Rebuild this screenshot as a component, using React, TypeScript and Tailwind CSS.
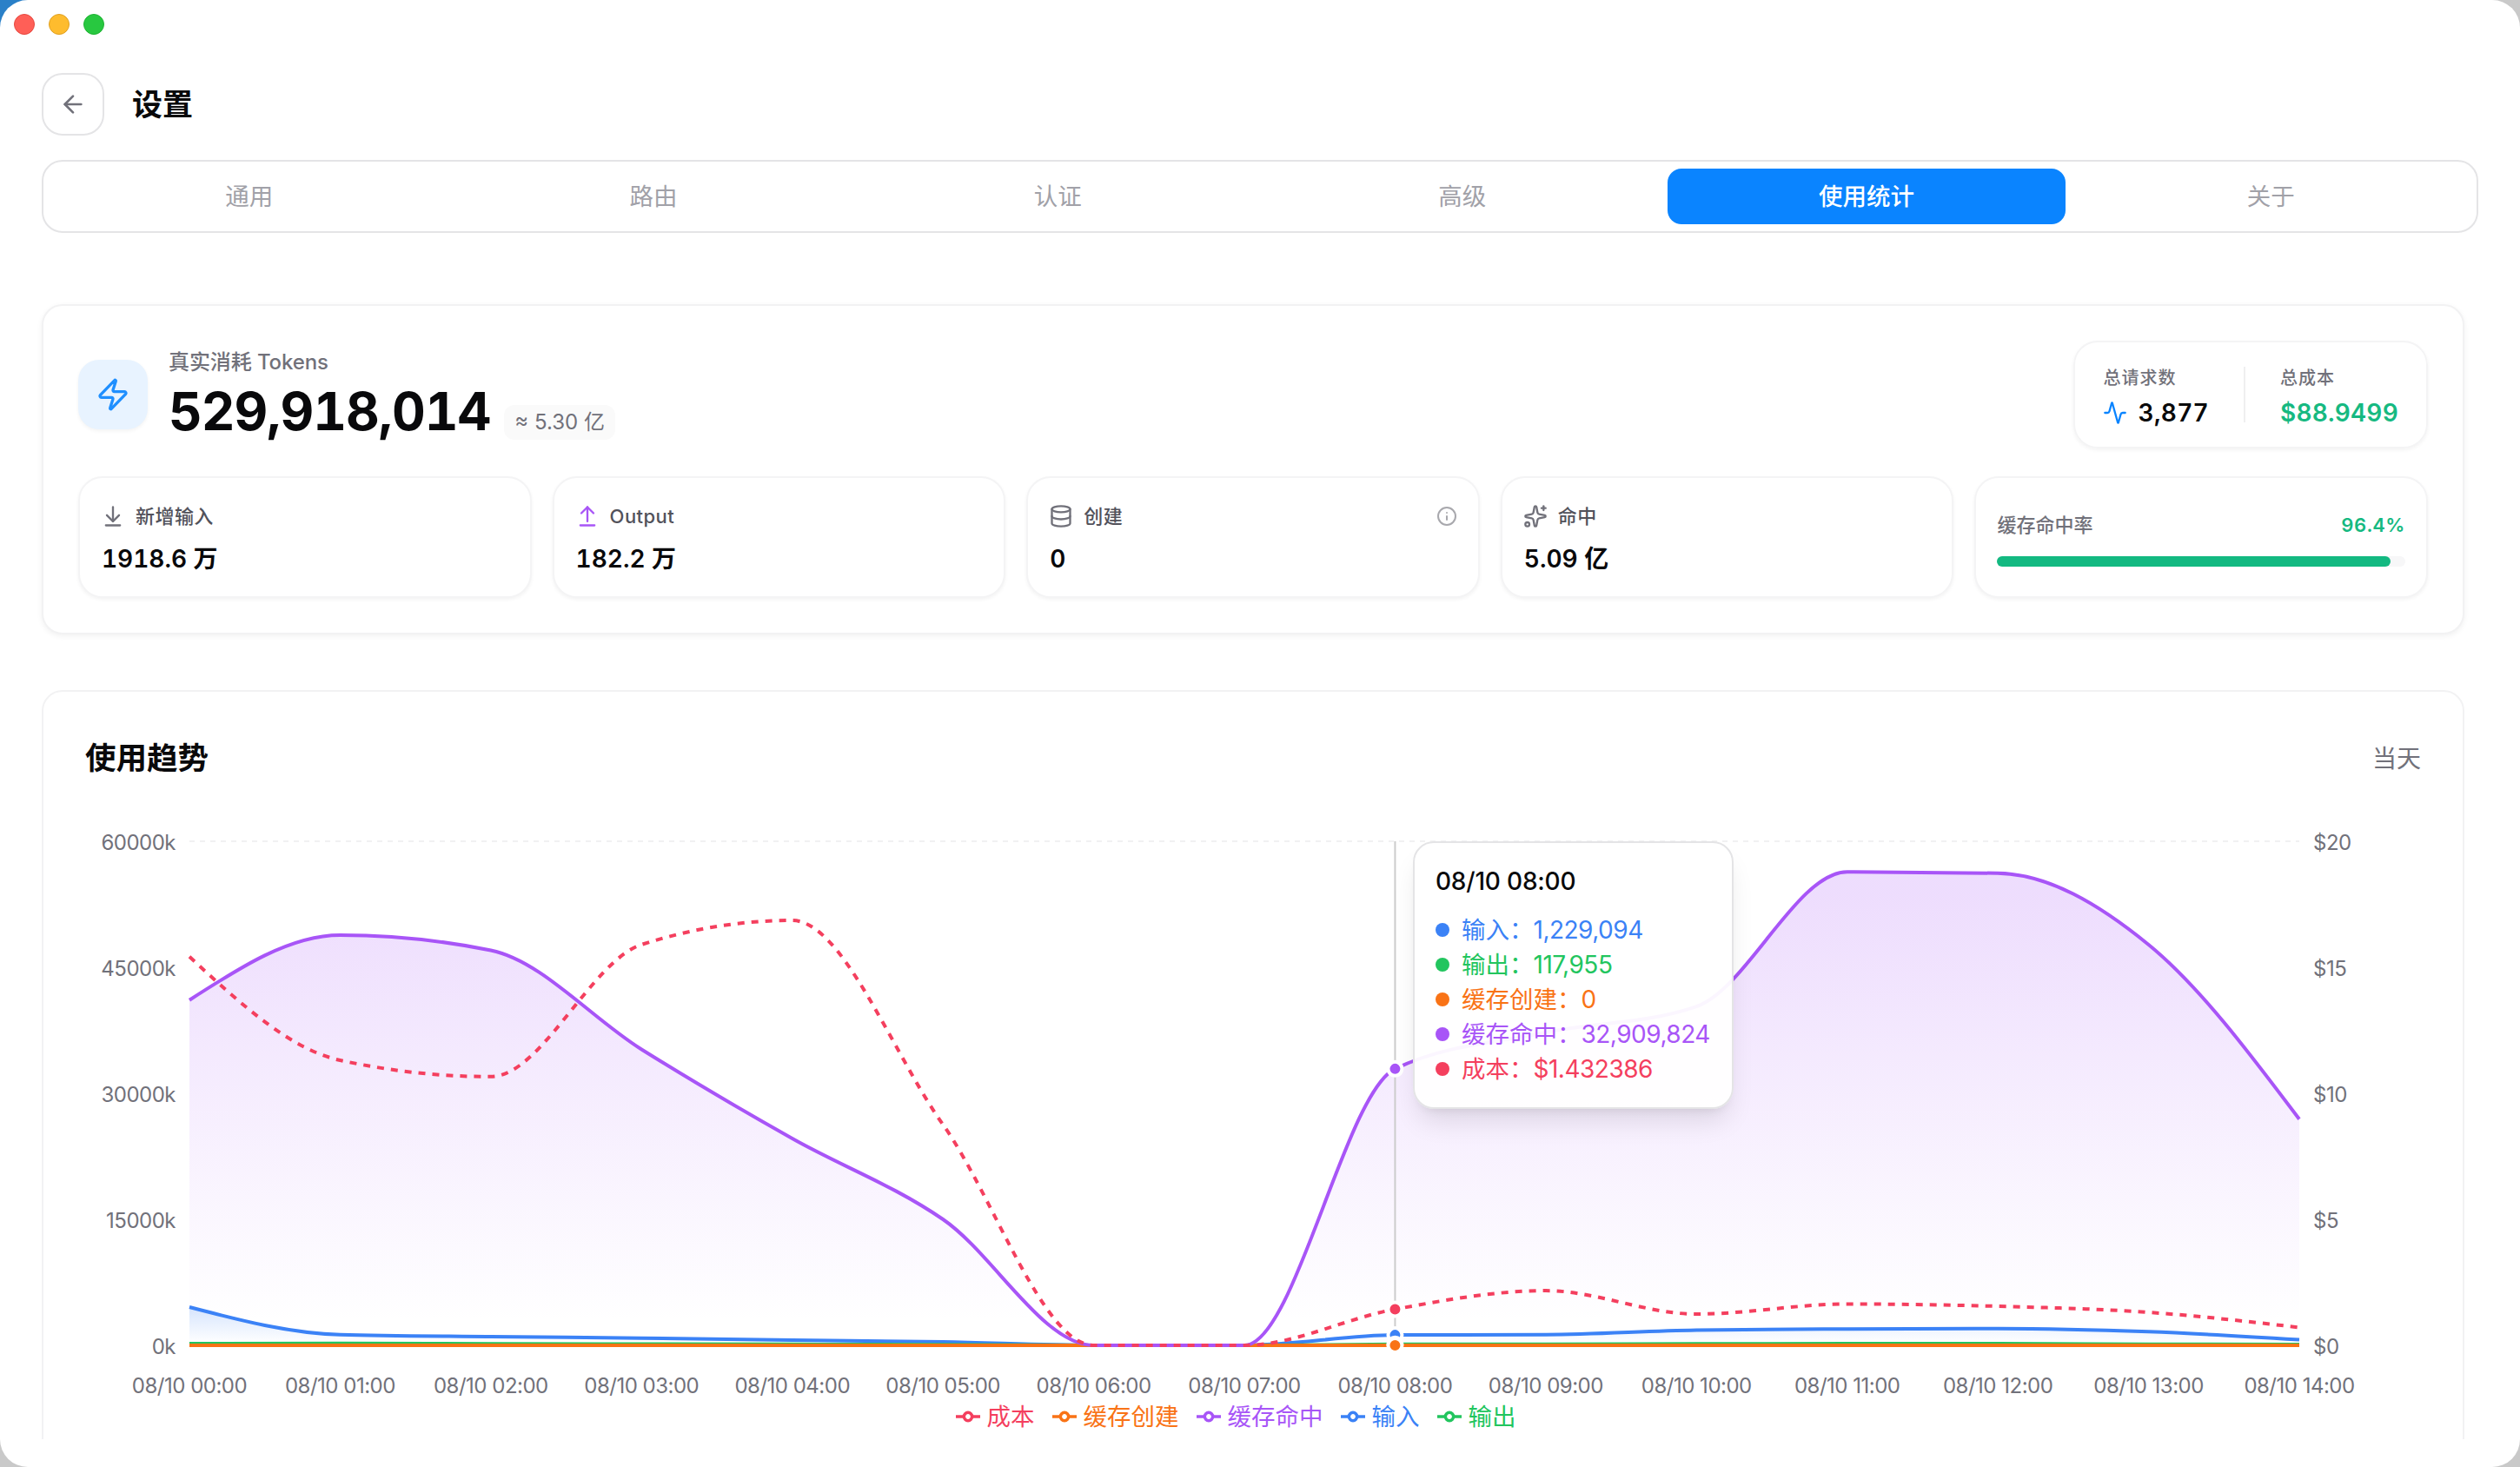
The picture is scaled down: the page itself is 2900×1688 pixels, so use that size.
import type { ReactNode } from 'react';
import {
  Activity,
  ArrowDownToLine,
  ArrowLeft,
  ArrowUpFromLine,
  Database,
  Info,
  Sparkles,
  Zap,
} from 'lucide-react';

const TABS = ['通用', '路由', '认证', '高级', '使用统计', '关于'];
const ACTIVE_TAB = '使用统计';

const COLORS = {
  input: '#3b82f6',
  output: '#22c55e',
  cacheCreate: '#f97316',
  cacheHit: '#a855f7',
  cost: '#f43f5e',
};

// Hourly buckets, tokens in millions, cost in dollars
const INPUT = [4.55, 1.27, 1.03, 0.86, 0.62, 0.41, 0, 0, 1.229, 1.27, 1.81, 1.95, 2.0, 1.62, 0.67];
const OUTPUT = [0.2, 0.24, 0.18, 0.15, 0.12, 0.08, 0, 0, 0.118, 0.13, 0.18, 0.2, 0.2, 0.14, 0.1];
const CACHE_CREATE = [0, 0, 0, 0, 0, 0, 0, 0, 0, 0, 0, 0, 0, 0, 0];
const CACHE_HIT = [41.1, 48.83, 47.02, 35.22, 24.62, 15.0, 0, 0, 32.91, 37.24, 40.34, 56.35, 56.2, 47.69, 26.92];
const COST = [15.42, 11.31, 10.66, 15.9, 16.86, 8.76, 0, 0, 1.4324, 2.17, 1.24, 1.64, 1.55, 1.31, 0.71];

const PLOT = { left: 120, right: 2548, top: 20, bottom: 600 };
const HOVER = 8;

const xAt = (i: number) => PLOT.left + (i * (PLOT.right - PLOT.left)) / 14;
const yAt = (v: number, max: number) => PLOT.bottom - (v / max) * (PLOT.bottom - PLOT.top);

/** Monotone cubic interpolation, same tangents as d3's curveMonotoneX. */
function monotonePath(values: number[], max: number) {
  const pts = values.map((v, i) => [xAt(i), yAt(v, max)]);
  const n = pts.length;
  const h = xAt(1) - xAt(0);
  const slopes = pts.slice(1).map((p, i) => (p[1] - pts[i][1]) / h);
  const t: number[] = new Array(n).fill(0);
  for (let i = 1; i < n - 1; i++) {
    const s0 = slopes[i - 1];
    const s1 = slopes[i];
    const p = (s0 + s1) / 2;
    t[i] = (Math.sign(s0) + Math.sign(s1)) * Math.min(Math.abs(s0), Math.abs(s1), 0.5 * Math.abs(p)) || 0;
  }
  t[0] = (3 * slopes[0] - t[1]) / 2;
  t[n - 1] = (3 * slopes[n - 2] - t[n - 2]) / 2;

  let d = `M${pts[0][0]},${pts[0][1]}`;
  for (let i = 1; i < n; i++) {
    const [x0, y0] = pts[i - 1];
    const [x1, y1] = pts[i];
    d += `C${x0 + h / 3},${y0 + (h / 3) * t[i - 1]},${x1 - h / 3},${y1 - (h / 3) * t[i]},${x1},${y1}`;
  }
  return d;
}

function AreaSeries({ id, values, color }: { id: string; values: number[]; color: string }) {
  const line = monotonePath(values, 60);
  return (
    <g>
      <defs>
        <linearGradient id={id} x1="0" y1="0" x2="0" y2="1">
          <stop offset="5%" stopColor={color} stopOpacity={0.2} />
          <stop offset="95%" stopColor={color} stopOpacity={0} />
        </linearGradient>
      </defs>
      <path d={`${line}L${PLOT.right},${PLOT.bottom}L${PLOT.left},${PLOT.bottom}Z`} fill={`url(#${id})`} />
      <path d={line} fill="none" stroke={color} strokeWidth={4} />
    </g>
  );
}

function ActiveDot({ value, max, color }: { value: number; max: number; color: string }) {
  return <circle cx={xAt(HOVER)} cy={yAt(value, max)} r={8} fill={color} stroke="#fff" strokeWidth={4} />;
}

function TrendChart() {
  return (
    <svg className="block w-[2688px] h-[662px] overflow-visible" viewBox="0 0 2688 662">
      <line
        x1={PLOT.left} x2={PLOT.right} y1={PLOT.top} y2={PLOT.top}
        stroke="#f1f1f2" strokeWidth={2} strokeDasharray="6 6"
      />
      <g fill="#71717a" fontSize={24} letterSpacing={-0.5}>
        {[60000, 45000, 30000, 15000, 0].map((v) => (
          <text key={v} x={104} y={yAt(v, 60000) + 9.5} textAnchor="end">{`${v}k`}</text>
        ))}
        {[20, 15, 10, 5, 0].map((v) => (
          <text key={v} x={2564} y={yAt(v, 20) + 9.5}>{`$${v}`}</text>
        ))}
        {INPUT.map((_, i) => (
          <text key={i} x={xAt(i)} y={655} textAnchor="middle">
            {`08/10 ${String(i).padStart(2, '0')}:00`}
          </text>
        ))}
      </g>

      <AreaSeries id="fill-input" values={INPUT} color={COLORS.input} />
      <AreaSeries id="fill-output" values={OUTPUT} color={COLORS.output} />
      <AreaSeries id="fill-create" values={CACHE_CREATE} color={COLORS.cacheCreate} />
      <AreaSeries id="fill-hit" values={CACHE_HIT} color={COLORS.cacheHit} />
      <path
        d={monotonePath(COST, 20)}
        fill="none" stroke={COLORS.cost} strokeWidth={4} strokeDasharray="8 8"
      />

      {/* Hover cursor */}
      <line x1={xAt(HOVER)} x2={xAt(HOVER)} y1={PLOT.top} y2={PLOT.bottom} stroke="#ccc" strokeWidth={2} />
      <ActiveDot value={INPUT[HOVER]} max={60} color={COLORS.input} />
      <ActiveDot value={OUTPUT[HOVER]} max={60} color={COLORS.output} />
      <ActiveDot value={0} max={60} color={COLORS.cacheCreate} />
      <ActiveDot value={CACHE_HIT[HOVER]} max={60} color={COLORS.cacheHit} />
      <ActiveDot value={COST[HOVER]} max={20} color={COLORS.cost} />
    </svg>
  );
}

const TOOLTIP_ROWS = [
  { label: '输入', value: '1,229,094', color: COLORS.input },
  { label: '输出', value: '117,955', color: COLORS.output },
  { label: '缓存创建', value: '0', color: COLORS.cacheCreate },
  { label: '缓存命中', value: '32,909,824', color: COLORS.cacheHit },
  { label: '成本', value: '$1.432386', color: COLORS.cost },
];

function ChartTooltip() {
  return (
    <div className="absolute left-[1528px] top-5 w-[369px] h-[308px] rounded-3xl border-2 border-[#e4e4e6] bg-white/95 p-6 shadow-[0_20px_30px_-6px_rgba(0,0,0,0.1),0_8px_12px_-8px_rgba(0,0,0,0.1)]">
      <div className="mb-4 h-10 text-[28px]/10 font-medium tracking-[-0.2px] text-[#09090b]">08/10 08:00</div>
      {TOOLTIP_ROWS.map((row) => (
        <div
          key={row.label}
          className="flex h-10 items-center whitespace-nowrap"
          style={{ color: row.color }}
        >
          <span className="mr-[14px] size-4 shrink-0 rounded-full bg-current" />
          <span className="text-[27.5px]/10">{row.label}：</span>
          <span className="text-[28px]/10 tracking-[-0.5px]">{row.value}</span>
        </div>
      ))}
    </div>
  );
}

const LEGEND = [
  { label: '成本', color: COLORS.cost },
  { label: '缓存创建', color: COLORS.cacheCreate },
  { label: '缓存命中', color: COLORS.cacheHit },
  { label: '输入', color: COLORS.input },
  { label: '输出', color: COLORS.output },
];

function Legend() {
  return (
    <div className="flex h-10 items-center justify-center gap-5 pr-10">
      {LEGEND.map((item) => (
        <div key={item.label} className="flex items-center gap-2 text-[27.5px]/10" style={{ color: item.color }}>
          <svg className="size-7" viewBox="0 0 32 32" fill="none" stroke="currentColor" strokeWidth={4}>
            <path d="M0,16h10.67A5.33,5.33,0,1,1,21.33,16H32M21.33,16A5.33,5.33,0,1,1,10.67,16" />
          </svg>
          <span>{item.label}</span>
        </div>
      ))}
    </div>
  );
}

const STAT_CARD = 'h-[140px] rounded-[28px] border-2 border-[#f4f4f5] bg-white px-6 shadow-[0_2px_4px_rgba(0,0,0,0.05)]';

interface StatCardProps {
  icon: ReactNode;
  label: string;
  value: string;
  info?: boolean;
}

function StatCard({ icon, label, value, info }: StatCardProps) {
  return (
    <div className={`${STAT_CARD} pt-6`}>
      <div className="flex h-10 items-center gap-3">
        {icon}
        <span className="text-[22px] font-medium tracking-[0.02em] text-[#52525b]">{label}</span>
        {info && <Info className="ml-auto size-6 text-[#a8a8ad]" />}
      </div>
      <div className="mt-[9px] h-10 pl-px text-[28px]/10 font-semibold text-[#09090b] tabular-nums">{value}</div>
    </div>
  );
}

function SummaryCard() {
  return (
    <section className="mt-[82px] w-[2788px] h-[380px] rounded-3xl border-2 border-[#f2f2f3] bg-white p-10 shadow-[0_2px_6px_rgba(0,0,0,0.06)]">
      <div className="flex h-[124px] items-center justify-between">
        <div className="flex items-center">
          <div className="flex size-20 items-center justify-center rounded-3xl bg-[#e8f3ff] shadow-[0_2px_4px_rgba(0,0,0,0.05)]">
            <Zap className="size-10 text-[#1f8fff]" />
          </div>
          <div className="ml-6 flex h-[124px] flex-col pt-[9px]">
            <span className="h-8 text-2xl/8 font-medium tracking-[-0.1px] text-[#71717a]">真实消耗 Tokens</span>
            <div className="mt-0.5 flex h-[76px] items-start">
              <span className="text-[60px]/[76px] font-bold tracking-[-1px] text-[#09090b] tabular-nums">
                529,918,014
              </span>
              <span className="ml-4 mt-[31px] h-10 rounded-xl bg-[#fafafa] px-3 text-2xl/10 text-[#71717a]">
                ≈ 5.30 亿
              </span>
            </div>
          </div>
        </div>

        <div className="flex h-[124px] items-center rounded-[28px] border-2 border-[#f4f4f5] px-8 shadow-[0_2px_4px_rgba(0,0,0,0.05)]">
          <div className="flex flex-col pt-1.5">
            <span className="h-8 text-xl/8 font-medium tracking-[0.05em] text-[#71717a]">总请求数</span>
            <span className="mt-1 flex h-10 items-center gap-3 text-[28px]/10 font-semibold tracking-[0.3px] text-[#09090b] tabular-nums">
              <Activity className="size-7 text-[#0a84ff]" />
              3,877
            </span>
          </div>
          <div className="mx-10 h-16 w-0.5 bg-[#efeff0]" />
          <div className="flex flex-col pt-1.5">
            <span className="h-8 text-xl/8 font-medium tracking-[0.05em] text-[#71717a]">总成本</span>
            <span className="mt-1 h-10 text-[28px]/10 font-semibold tracking-[0.2px] text-[#16b981] tabular-nums">
              $88.9499
            </span>
          </div>
        </div>
      </div>

      <div className="mt-8 grid grid-cols-5 gap-6">
        <StatCard icon={<ArrowDownToLine className="size-7 text-[#71717a]" />} label="新增输入" value="1918.6 万" />
        <StatCard icon={<ArrowUpFromLine className="size-7 text-[#a855f7]" />} label="Output" value="182.2 万" />
        <StatCard icon={<Database className="size-7 text-[#71717a]" />} label="创建" value="0" info />
        <StatCard icon={<Sparkles className="size-7 text-[#71717a]" />} label="命中" value="5.09 亿" />
        <div className={`${STAT_CARD} flex flex-col justify-center gap-4`}>
          <div className="flex h-10 items-center justify-between text-[22px] font-medium text-[#71717a]">
            <span>缓存命中率</span>
            <span className="font-semibold tracking-[0.6px] text-[#16b981] tabular-nums">96.4%</span>
          </div>
          <div className="h-3 rounded-full bg-[#f7f7f8]">
            <div className="h-3 w-[96.4%] rounded-full bg-[#13b981]" />
          </div>
        </div>
      </div>
    </section>
  );
}

function TrendCard() {
  return (
    <section className="mt-16 w-[2788px] h-[900px] shrink-0 rounded-3xl border-2 border-[#f2f2f3] bg-white p-12">
      <div className="flex h-14 items-center justify-between">
        <h3 className="pt-0.5 text-[35.5px] font-semibold text-[#09090b]">使用趋势</h3>
        <span className="pt-0.5 text-[28px] text-[#71717a]">当天</span>
      </div>
      <div className="relative mt-12">
        <TrendChart />
        <Legend />
        <ChartTooltip />
      </div>
    </section>
  );
}

export default function App() {
  return (
    <div className="w-[2900px] h-[1688px] overflow-hidden bg-linear-to-br from-[#2a80c8] from-5% to-[#c9c9c9] to-10% font-['Inter','Noto_Sans_CJK_SC',sans-serif] antialiased">
      <div className="h-full overflow-hidden rounded-[32px] bg-white px-12 pt-4">
        {/* Window controls */}
        <div className="-ml-8 flex h-6 gap-4">
          <span className="size-6 rounded-full border border-[#e5483f] bg-[#ff5f57]" />
          <span className="size-6 rounded-full border border-[#dfa023] bg-[#febc2e]" />
          <span className="size-6 rounded-full border border-[#1fb233] bg-[#28c840]" />
        </div>

        <header className="mt-11 flex h-[72px] items-center gap-8">
          <button className="flex size-[72px] items-center justify-center rounded-3xl border-2 border-[#e4e4e6]">
            <ArrowLeft className="size-8 text-[#71717a]" />
          </button>
          <h1 className="text-[35px] font-semibold text-[#09090b]">设置</h1>
        </header>

        <nav className="mt-7 grid h-[84px] w-[2804px] grid-cols-6 items-center gap-2 rounded-3xl border-2 border-[#e4e4e6] px-2">
          {TABS.map((tab) => (
            <button
              key={tab}
              className={
                tab === ACTIVE_TAB
                  ? 'h-16 rounded-2xl bg-[#0a84ff] pt-0.5 text-[27.5px] font-medium text-white'
                  : 'h-16 rounded-2xl pt-0.5 text-[27.5px] text-[#a1a1a8]'
              }
            >
              {tab}
            </button>
          ))}
        </nav>

        {/* Scroll area */}
        <main className="h-[1388px] overflow-hidden -mx-12 px-12">
          <SummaryCard />
          <TrendCard />
        </main>
      </div>
    </div>
  );
}
